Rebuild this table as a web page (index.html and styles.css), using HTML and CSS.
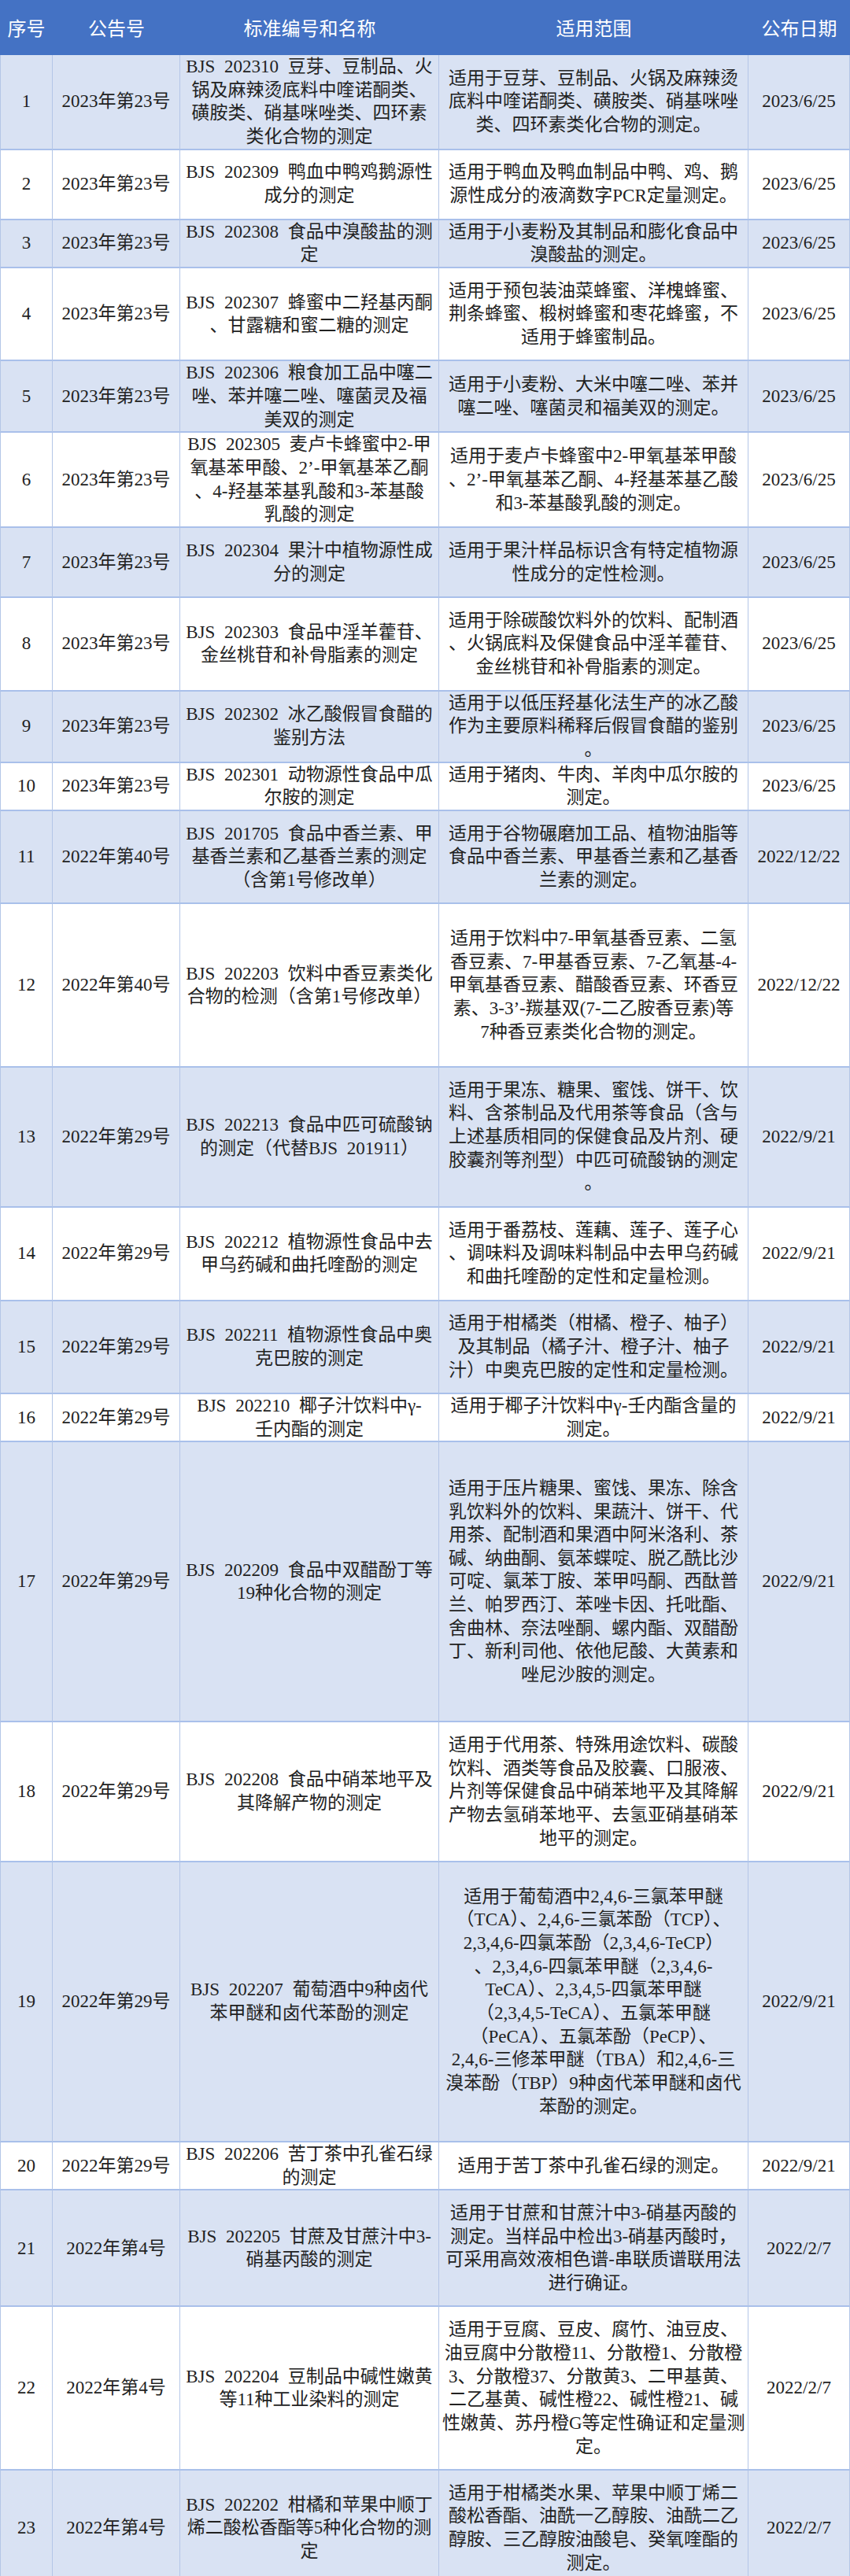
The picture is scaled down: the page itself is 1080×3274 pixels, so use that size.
FILE: index.html
```html
<!DOCTYPE html>
<html lang="zh-CN">
<head>
<meta charset="utf-8">
<title>标准列表</title>
<link rel="stylesheet" href="styles.css">
</head>
<body>
<table class="std">
<colgroup>
<col class="c-no"><col class="c-notice"><col class="c-name"><col class="c-scope"><col class="c-date">
</colgroup>
<thead>
<tr><th>序号</th><th>公告号</th><th>标准编号和名称</th><th>适用范围</th><th>公布日期</th></tr>
</thead>
<tbody>
<tr class="l4"><td>1</td><td>2023年第23号</td><td class="name">BJS 202310 豆芽、豆制品、火<br>锅及麻辣烫底料中喹诺酮类、<br>磺胺类、硝基咪唑类、四环素<br>类化合物的测定</td><td class="scope">适用于豆芽、豆制品、火锅及麻辣烫<br>底料中喹诺酮类、磺胺类、硝基咪唑<br>类、四环素类化合物的测定。</td><td>2023/6/25</td></tr>
<tr class="l3"><td>2</td><td>2023年第23号</td><td class="name">BJS 202309 鸭血中鸭鸡鹅源性<br>成分的测定</td><td class="scope">适用于鸭血及鸭血制品中鸭、鸡、鹅<br>源性成分的液滴数字PCR定量测定。</td><td>2023/6/25</td></tr>
<tr class="l2"><td>3</td><td>2023年第23号</td><td class="name">BJS 202308 食品中溴酸盐的测<br>定</td><td class="scope">适用于小麦粉及其制品和膨化食品中<br>溴酸盐的测定。</td><td>2023/6/25</td></tr>
<tr class="l4"><td>4</td><td>2023年第23号</td><td class="name">BJS 202307 蜂蜜中二羟基丙酮<br>、甘露糖和蜜二糖的测定</td><td class="scope">适用于预包装油菜蜂蜜、洋槐蜂蜜、<br>荆条蜂蜜、椴树蜂蜜和枣花蜂蜜，不<br>适用于蜂蜜制品。</td><td>2023/6/25</td></tr>
<tr class="l3"><td>5</td><td>2023年第23号</td><td class="name">BJS 202306 粮食加工品中噻二<br>唑、苯并噻二唑、噻菌灵及福<br>美双的测定</td><td class="scope">适用于小麦粉、大米中噻二唑、苯并<br>噻二唑、噻菌灵和福美双的测定。</td><td>2023/6/25</td></tr>
<tr class="l4"><td>6</td><td>2023年第23号</td><td class="name">BJS 202305 麦卢卡蜂蜜中2-甲<br>氧基苯甲酸、2’-甲氧基苯乙酮<br>、4-羟基苯基乳酸和3-苯基酸<br>乳酸的测定</td><td class="scope">适用于麦卢卡蜂蜜中2-甲氧基苯甲酸<br>、2’-甲氧基苯乙酮、4-羟基苯基乙酸<br>和3-苯基酸乳酸的测定。</td><td>2023/6/25</td></tr>
<tr class="l3"><td>7</td><td>2023年第23号</td><td class="name">BJS 202304 果汁中植物源性成<br>分的测定</td><td class="scope">适用于果汁样品标识含有特定植物源<br>性成分的定性检测。</td><td>2023/6/25</td></tr>
<tr class="l4"><td>8</td><td>2023年第23号</td><td class="name">BJS 202303 食品中淫羊藿苷、<br>金丝桃苷和补骨脂素的测定</td><td class="scope">适用于除碳酸饮料外的饮料、配制酒<br>、火锅底料及保健食品中淫羊藿苷、<br>金丝桃苷和补骨脂素的测定。</td><td>2023/6/25</td></tr>
<tr class="l3"><td>9</td><td>2023年第23号</td><td class="name">BJS 202302 冰乙酸假冒食醋的<br>鉴别方法</td><td class="scope">适用于以低压羟基化法生产的冰乙酸<br>作为主要原料稀释后假冒食醋的鉴别<br>。</td><td>2023/6/25</td></tr>
<tr class="l2"><td>10</td><td>2023年第23号</td><td class="name">BJS 202301 动物源性食品中瓜<br>尔胺的测定</td><td class="scope">适用于猪肉、牛肉、羊肉中瓜尔胺的<br>测定。</td><td>2023/6/25</td></tr>
<tr class="l4"><td>11</td><td>2022年第40号</td><td class="name">BJS 201705 食品中香兰素、甲<br>基香兰素和乙基香兰素的测定<br>（含第1号修改单）</td><td class="scope">适用于谷物碾磨加工品、植物油脂等<br>食品中香兰素、甲基香兰素和乙基香<br>兰素的测定。</td><td>2022/12/22</td></tr>
<tr class="l7"><td>12</td><td>2022年第40号</td><td class="name">BJS 202203 饮料中香豆素类化<br>合物的检测（含第1号修改单）</td><td class="scope">适用于饮料中7-甲氧基香豆素、二氢<br>香豆素、7-甲基香豆素、7-乙氧基-4-<br>甲氧基香豆素、醋酸香豆素、环香豆<br>素、3-3’-羰基双(7-二乙胺香豆素)等<br>7种香豆素类化合物的测定。</td><td>2022/12/22</td></tr>
<tr class="l6"><td>13</td><td>2022年第29号</td><td class="name">BJS 202213 食品中匹可硫酸钠<br>的测定（代替BJS 201911）</td><td class="scope">适用于果冻、糖果、蜜饯、饼干、饮<br>料、含茶制品及代用茶等食品（含与<br>上述基质相同的保健食品及片剂、硬<br>胶囊剂等剂型）中匹可硫酸钠的测定<br>。</td><td>2022/9/21</td></tr>
<tr class="l4"><td>14</td><td>2022年第29号</td><td class="name">BJS 202212 植物源性食品中去<br>甲乌药碱和曲托喹酚的测定</td><td class="scope">适用于番荔枝、莲藕、莲子、莲子心<br>、调味料及调味料制品中去甲乌药碱<br>和曲托喹酚的定性和定量检测。</td><td>2022/9/21</td></tr>
<tr class="l4"><td>15</td><td>2022年第29号</td><td class="name">BJS 202211 植物源性食品中奥<br>克巴胺的测定</td><td class="scope">适用于柑橘类（柑橘、橙子、柚子）<br>及其制品（橘子汁、橙子汁、柚子<br>汁）中奥克巴胺的定性和定量检测。</td><td>2022/9/21</td></tr>
<tr class="l2"><td>16</td><td>2022年第29号</td><td class="name">BJS 202210 椰子汁饮料中γ-<br>壬内酯的测定</td><td class="scope">适用于椰子汁饮料中γ-壬内酯含量的<br>测定。</td><td>2022/9/21</td></tr>
<tr class="l12"><td>17</td><td>2022年第29号</td><td class="name">BJS 202209 食品中双醋酚丁等<br>19种化合物的测定</td><td class="scope">适用于压片糖果、蜜饯、果冻、除含<br>乳饮料外的饮料、果蔬汁、饼干、代<br>用茶、配制酒和果酒中阿米洛利、茶<br>碱、纳曲酮、氨苯蝶啶、脱乙酰比沙<br>可啶、氯苯丁胺、苯甲吗酮、西酞普<br>兰、帕罗西汀、苯唑卡因、托吡酯、<br>舍曲林、奈法唑酮、螺内酯、双醋酚<br>丁、新利司他、依他尼酸、大黄素和<br>唑尼沙胺的测定。</td><td>2022/9/21</td></tr>
<tr class="l6"><td>18</td><td>2022年第29号</td><td class="name">BJS 202208 食品中硝苯地平及<br>其降解产物的测定</td><td class="scope">适用于代用茶、特殊用途饮料、碳酸<br>饮料、酒类等食品及胶囊、口服液、<br>片剂等保健食品中硝苯地平及其降解<br>产物去氢硝苯地平、去氢亚硝基硝苯<br>地平的测定。</td><td>2022/9/21</td></tr>
<tr class="l12"><td>19</td><td>2022年第29号</td><td class="name">BJS 202207 葡萄酒中9种卤代<br>苯甲醚和卤代苯酚的测定</td><td class="scope">适用于葡萄酒中2,4,6-三氯苯甲醚<br>（TCA）、2,4,6-三氯苯酚（TCP）、<br>2,3,4,6-四氯苯酚（2,3,4,6-TeCP）<br>、2,3,4,6-四氯苯甲醚（2,3,4,6-<br>TeCA）、2,3,4,5-四氯苯甲醚<br>（2,3,4,5-TeCA）、五氯苯甲醚<br>（PeCA）、五氯苯酚（PeCP）、<br>2,4,6-三修苯甲醚（TBA）和2,4,6-三<br>溴苯酚（TBP）9种卤代苯甲醚和卤代<br>苯酚的测定。</td><td>2022/9/21</td></tr>
<tr class="l2"><td>20</td><td>2022年第29号</td><td class="name">BJS 202206 苦丁茶中孔雀石绿<br>的测定</td><td class="scope">适用于苦丁茶中孔雀石绿的测定。</td><td>2022/9/21</td></tr>
<tr class="l5"><td>21</td><td>2022年第4号</td><td class="name">BJS 202205 甘蔗及甘蔗汁中3-<br>硝基丙酸的测定</td><td class="scope">适用于甘蔗和甘蔗汁中3-硝基丙酸的<br>测定。当样品中检出3-硝基丙酸时，<br>可采用高效液相色谱-串联质谱联用法<br>进行确证。</td><td>2022/2/7</td></tr>
<tr class="l7"><td>22</td><td>2022年第4号</td><td class="name">BJS 202204 豆制品中碱性嫩黄<br>等11种工业染料的测定</td><td class="scope">适用于豆腐、豆皮、腐竹、油豆皮、<br>油豆腐中分散橙11、分散橙1、分散橙<br>3、分散橙37、分散黄3、二甲基黄、<br>二乙基黄、碱性橙22、碱性橙21、碱<br>性嫩黄、苏丹橙G等定性确证和定量测<br>定。</td><td>2022/2/7</td></tr>
<tr class="l5"><td>23</td><td>2022年第4号</td><td class="name">BJS 202202 柑橘和苹果中顺丁<br>烯二酸松香酯等5种化合物的测<br>定</td><td class="scope">适用于柑橘类水果、苹果中顺丁烯二<br>酸松香酯、油酰一乙醇胺、油酰二乙<br>醇胺、三乙醇胺油酸皂、癸氧喹酯的<br>测定。</td><td>2022/2/7</td></tr>
</tbody>
</table>
</body>
</html>
```

FILE: styles.css
```css
html, body {
  margin: 0;
  padding: 0;
  background: #ffffff;
}

.std {
  width: 1080px;
  table-layout: fixed;
  border-collapse: separate;
  border-spacing: 0;
  font-family: "Liberation Serif", "Noto Sans CJK SC", serif;
  font-size: 23px;
  line-height: 29.65px;
  color: #222222;
}

.c-no { width: 67px; }
.c-notice { width: 162px; }
.c-name { width: 329px; }
.c-scope { width: 393px; }
.c-date { width: 129px; }

.std th {
  height: 70px;
  padding: 0;
  background: #4472c4;
  color: #ffffff;
  font-family: "Noto Sans CJK SC", sans-serif;
  font-weight: 400;
  font-size: 24px;
  text-align: center;
  vertical-align: middle;
  box-sizing: border-box;
}

.std td {
  box-sizing: border-box;
  padding: 0 4px;
  text-align: center;
  vertical-align: middle;
  white-space: nowrap;
  border-right: 1px solid #b4c6e7;
  border-bottom: 2px solid #a9c0ea;
}

.std td:first-child {
  border-left: 1px solid #b4c6e7;
}

.std td.name {
  word-spacing: 6px;
}

.std tbody tr:nth-child(odd) td {
  background: #d9e2f3;
}

.std tbody tr:nth-child(even) td {
  background: #ffffff;
}

.l2 { height: 59.3px; }
.l3 { height: 88.95px; }
.l4 { height: 118.6px; }
.l5 { height: 148.25px; }
.l6 { height: 177.9px; }
.l7 { height: 207.55px; }
.l12 { height: 355.8px; }
```
